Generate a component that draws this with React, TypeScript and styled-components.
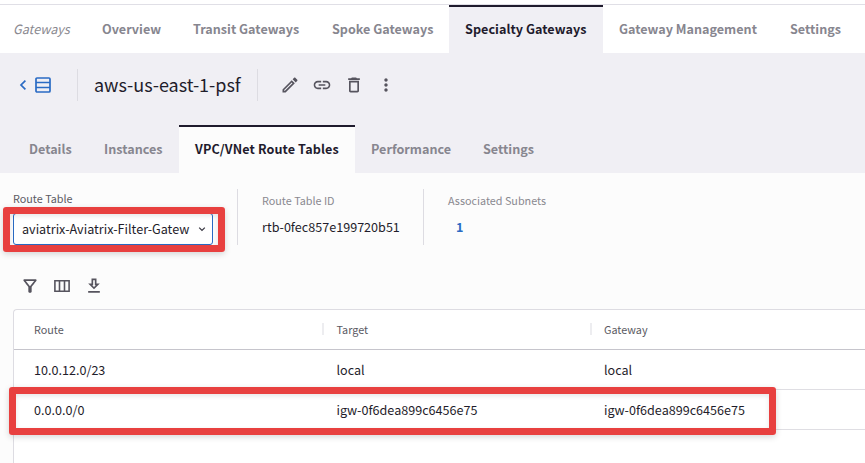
import React from 'react';
import styled, { createGlobalStyle, css } from 'styled-components';
import {
  MdDeleteOutline,
  MdLink,
  MdMoreVert,
  MdOutlineEdit,
  MdOutlineFilterAlt,
} from 'react-icons/md';

const GlobalStyle = createGlobalStyle`
  * { box-sizing: border-box; }
  body {
    margin: 0;
    overflow: hidden;
    background: #fcfcfc;
    color: #1f1d2b;
    font-family: "Noto Sans CJK SC", "Noto Sans", sans-serif;
    font-size: 12.6px;
  }
`;

const Page = styled.div`
  height: 463px;
  padding-top: 4px;
  display: flex;
  flex-direction: column;
  overflow: hidden;
  background: #fff;
`;

const TopNav = styled.nav`
  flex: none;
  display: flex;
  height: 49px;
  border-top: 1px solid #e0dfe6;
`;

const Section = styled.span`
  width: 86px;
  padding-left: 13px;
  line-height: 47px;
  font-style: italic;
  color: #8a8990;
`;

const Tab = styled.a<{ $width: number; $active?: boolean; $fill?: string; $tracking?: number }>`
  flex: none;
  width: ${(p) => p.$width}px;
  height: 48px;
  padding-left: 16px;
  line-height: 47px;
  font-weight: 700;
  letter-spacing: ${(p) => p.$tracking ?? 0}px;
  white-space: nowrap;
  color: #87868f;
  ${(p) =>
    p.$active &&
    css`
      color: #1f1b2d;
      background: ${p.$fill};
      box-shadow: inset 0 2px #1f1b2d;
    `}
`;

const Header = styled.header`
  flex: none;
  height: 120px;
  display: flex;
  flex-direction: column;
  justify-content: space-between;
  background: #f0eff4;
`;

const TitleBar = styled.div`
  display: flex;
  align-items: center;
  height: 64px;
  padding-left: 19px;
`;

const BackLink = styled.a`
  display: flex;
  align-items: center;
  width: 58px;
  color: #2a6bc4;
`;

const Title = styled.h1`
  margin: 0;
  width: 181px;
  height: 32px;
  padding-left: 16px;
  border: solid #dddce2;
  border-width: 0 1px;
  font-size: 18px;
  font-weight: 400;
  line-height: 30px;
  letter-spacing: -0.04px;
  white-space: nowrap;
`;

const Actions = styled.div`
  display: flex;
  gap: 12px;
  padding-left: 22px;
  font-size: 20px;
  color: #56545e;
  svg { display: block; }
`;

const SubTabs = styled.nav`
  display: flex;
  padding-left: 13px;
`;

const Body = styled.main`
  flex: 1;
  min-height: 0;
  padding: 16px 0 0 13px;
  background: #fcfcfc;
`;

const Summary = styled.div`
  display: flex;
  height: 56px;
`;

const Field = styled.div<{ $width: number }>`
  width: ${(p) => p.$width}px;
  & + & {
    padding-left: 24px;
    border-left: 1px solid #dddce2;
  }
`;

const Label = styled.div<{ $strong?: boolean }>`
  height: ${(p) => (p.$strong ? 20 : 22)}px;
  padding-top: ${(p) => (p.$strong ? 0 : 2)}px;
  font-size: 10.8px;
  line-height: 18px;
  color: ${(p) => (p.$strong ? '#5b5a63' : '#8a8990')};
`;

const Value = styled.div`
  margin-top: 6px;
  line-height: 19px;
`;

const CountLink = styled.a`
  display: block;
  margin: 6px 0 0 8px;
  line-height: 19px;
  font-weight: 700;
  color: #2a6bc4;
`;

const Highlight = styled.span<{ $inset: string }>`
  position: absolute;
  inset: ${(p) => p.$inset};
  border: 7px solid #e8403f;
  border-radius: 3px;
  box-shadow: 0 2px 6px rgba(0, 0, 0, 0.16), inset 0 2px 5px rgba(0, 0, 0, 0.1);
  pointer-events: none;
`;

const SelectBox = styled.div`
  position: relative;
  display: flex;
  align-items: center;
  justify-content: space-between;
  width: 200px;
  height: 32px;
  margin-top: 4px;
  padding: 0 3px 0 8px;
  border: 1px solid #2a6bc4;
  border-radius: 3px;
  background: #fff;
`;

const SelectText = styled.span`
  line-height: 30px;
  white-space: nowrap;
`;

const Tools = styled.div`
  display: flex;
  gap: 12px;
  padding: 31px 0 13px 7px;
  font-size: 20px;
  color: #56545e;
  svg { display: block; }
`;

const Table = styled.div`
  height: 160px;
  border: solid #dddce2;
  border-width: 1px 0 0 1px;
  border-top-left-radius: 4px;
  background: #fff;
`;

const Row = styled.div<{ $head?: boolean }>`
  position: relative;
  display: grid;
  grid-template-columns: 308px 267.5px 1fr;
  align-items: center;
  height: 40px;
  border-bottom: 1px solid ${(p) => (p.$head ? '#c6c5cc' : '#dfdee3')};
  ${(p) =>
    p.$head &&
    css`
      padding-bottom: 1px;
      font-size: 10.8px;
      color: #5b5a63;
    `}
`;

const Cell = styled.span<{ $first?: boolean; $divided?: boolean }>`
  padding-left: ${(p) => (p.$first ? 20 : 12.5)}px;
  ${(p) => !p.$first && 'border-left: 2px solid transparent;'}
  ${(p) => p.$divided && 'border-left-color: #ededf0;'}
  line-height: 12px;
`;

const RowsIcon = () => (
  <svg width="16" height="16" viewBox="0 0 16 16" fill="none" stroke="currentColor" strokeWidth="1.7">
    <rect x="1" y="1" width="14" height="14" rx="1" />
    <path d="M1 5.5h14M1 10.5h14" />
  </svg>
);

const ColumnsIcon = () => (
  <svg width="20" height="20" viewBox="0 0 20 20" fill="none" stroke="currentColor" strokeWidth="1.6">
    <path d="M2.9 4.8h14.2v10.4H2.9zM7.5 4.8v10.4M12.5 4.8v10.4" />
  </svg>
);

const DownloadIcon = () => (
  <svg width="20" height="20" viewBox="0 0 24 24" fill="currentColor">
    <path d="M19 9h-4V3H9v6H5l7 7 7-7zm-8 2V5h2v6h1.17L12 13.17 9.83 11H11zm-6 7h14v2H5z" />
  </svg>
);

const topTabs = [
  { name: 'Overview', width: 91 },
  { name: 'Transit Gateways', width: 139 },
  { name: 'Spoke Gateways', width: 133 },
  { name: 'Specialty Gateways', width: 154, tracking: 0.04 },
  { name: 'Gateway Management', width: 171 },
  { name: 'Settings', width: 83 },
];

const subTabs = [
  { name: 'Details', width: 75 },
  { name: 'Instances', width: 91 },
  { name: 'VPC/VNet Route Tables', width: 176, tracking: 0.11 },
  { name: 'Performance', width: 112 },
  { name: 'Settings', width: 83 },
];

export default function App() {
  return (
    <Page>
      <GlobalStyle />
      <TopNav>
        <Section>Gateways</Section>
        {topTabs.map((t) => (
          <Tab
            key={t.name}
            $width={t.width}
            $tracking={t.tracking}
            $active={t.name === 'Specialty Gateways'}
            $fill="#f0eff4"
          >
            {t.name}
          </Tab>
        ))}
      </TopNav>
      <Header>
        <TitleBar>
          <BackLink>
            <svg width="16" height="16" viewBox="0 0 16 16" fill="none" stroke="currentColor" strokeWidth="1.7">
              <path d="M6.4 3.6L2 8l4.4 4.4" />
            </svg>
            <RowsIcon />
          </BackLink>
          <Title>aws-us-east-1-psf</Title>
          <Actions>
            <MdOutlineEdit />
            <MdLink />
            <MdDeleteOutline />
            <MdMoreVert />
          </Actions>
        </TitleBar>
        <SubTabs>
          {subTabs.map((t) => (
            <Tab
              key={t.name}
              $width={t.width}
              $tracking={t.tracking}
              $active={t.name.startsWith('VPC')}
              $fill="#fcfcfc"
            >
              {t.name}
            </Tab>
          ))}
        </SubTabs>
      </Header>
      <Body>
        <Summary>
          <Field $width={224}>
            <Label $strong>Route Table</Label>
            <SelectBox>
              <SelectText>aviatrix-Aviatrix-Filter-Gatew</SelectText>
              <svg width="14" height="14" viewBox="0 0 14 14" fill="none" stroke="#3b3944" strokeWidth="1.3">
                <path d="M4.2 5.6L7 8.4l2.8-2.8" />
              </svg>
              <Highlight $inset="-7px -13px -8px -11px" />
            </SelectBox>
          </Field>
          <Field $width={186}>
            <Label>Route Table ID</Label>
            <Value>rtb-0fec857e199720b51</Value>
          </Field>
          <Field $width={200}>
            <Label>Associated Subnets</Label>
            <CountLink>1</CountLink>
          </Field>
        </Summary>
        <Tools>
          <MdOutlineFilterAlt />
          <ColumnsIcon />
          <DownloadIcon />
        </Tools>
        <Table>
          <Row $head>
            <Cell $first>Route</Cell>
            <Cell $divided>Target</Cell>
            <Cell $divided>Gateway</Cell>
          </Row>
          <Row>
            <Cell $first>10.0.12.0/23</Cell>
            <Cell>local</Cell>
            <Cell>local</Cell>
          </Row>
          <Row>
            <Cell $first>0.0.0.0/0</Cell>
            <Cell>igw-0f6dea899c6456e75</Cell>
            <Cell>igw-0f6dea899c6456e75</Cell>
            <Highlight $inset="-3px 89px -6px -5px" />
          </Row>
        </Table>
      </Body>
    </Page>
  );
}
